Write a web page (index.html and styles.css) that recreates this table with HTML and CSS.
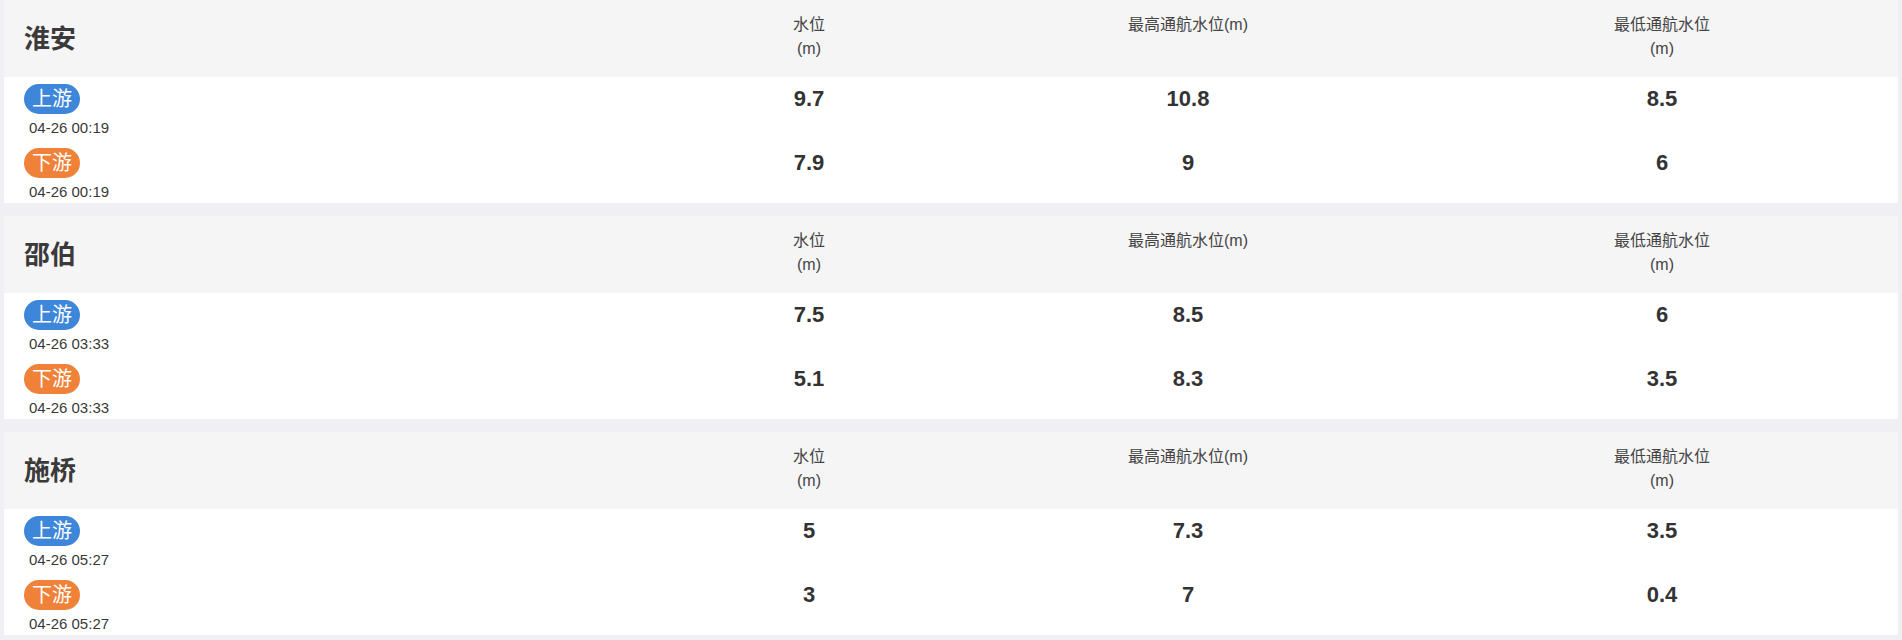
FILE: index.html
```html
<!DOCTYPE html>
<html lang="zh-CN">
<head>
<meta charset="utf-8">
<title>水位</title>
<link rel="stylesheet" href="styles.css">
</head>
<body>
<div class="list">
  <section class="card">
    <div class="grid head">
      <div class="title">淮安</div>
      <div class="th">水位<br>(m)</div>
      <div class="th">最高通航水位(m)</div>
      <div class="th">最低通航水位<br>(m)</div>
    </div>
    <div class="body">
      <div class="grid row">
        <div class="loc"><span class="badge up">上游</span><div class="date">04-26 00:19</div></div>
        <div class="val">9.7</div><div class="val">10.8</div><div class="val">8.5</div>
      </div>
      <div class="grid row">
        <div class="loc"><span class="badge down">下游</span><div class="date">04-26 00:19</div></div>
        <div class="val">7.9</div><div class="val">9</div><div class="val">6</div>
      </div>
    </div>
  </section>
  <section class="card">
    <div class="grid head">
      <div class="title">邵伯</div>
      <div class="th">水位<br>(m)</div>
      <div class="th">最高通航水位(m)</div>
      <div class="th">最低通航水位<br>(m)</div>
    </div>
    <div class="body">
      <div class="grid row">
        <div class="loc"><span class="badge up">上游</span><div class="date">04-26 03:33</div></div>
        <div class="val">7.5</div><div class="val">8.5</div><div class="val">6</div>
      </div>
      <div class="grid row">
        <div class="loc"><span class="badge down">下游</span><div class="date">04-26 03:33</div></div>
        <div class="val">5.1</div><div class="val">8.3</div><div class="val">3.5</div>
      </div>
    </div>
  </section>
  <section class="card">
    <div class="grid head">
      <div class="title">施桥</div>
      <div class="th">水位<br>(m)</div>
      <div class="th">最高通航水位(m)</div>
      <div class="th">最低通航水位<br>(m)</div>
    </div>
    <div class="body">
      <div class="grid row">
        <div class="loc"><span class="badge up">上游</span><div class="date">04-26 05:27</div></div>
        <div class="val">5</div><div class="val">7.3</div><div class="val">3.5</div>
      </div>
      <div class="grid row">
        <div class="loc"><span class="badge down">下游</span><div class="date">04-26 05:27</div></div>
        <div class="val">3</div><div class="val">7</div><div class="val">0.4</div>
      </div>
    </div>
  </section>
</div>
</body>
</html>
```
FILE: styles.css
```css
html, body {
  margin: 0;
  padding: 0;
  background: #efeff4;
}
body {
  font-family: "Liberation Sans", "Noto Sans CJK SC", sans-serif;
  color: #333;
}
.list {
  display: flex;
  flex-direction: column;
  gap: 13px;
  padding: 0 4px;
}
.card {
  background: #fff;
  height: 203px;
}
.grid {
  display: grid;
  grid-template-columns: 664px 282px 476px 472px;
}
.head {
  background: #f5f5f6;
  height: 77px;
}
.title {
  align-self: center;
  padding-left: 20px;
  font-size: 26px;
  font-weight: bold;
  color: #3a3a3a;
  line-height: 30px;
}
.th {
  padding-top: 13px;
  text-align: center;
  font-size: 16px;
  line-height: 24px;
  color: #444;
}
.body {
  display: flex;
  flex-direction: column;
  gap: 9px;
  padding-top: 7px;
}
.loc {
  padding-left: 20px;
}
.badge {
  display: inline-block;
  height: 30px;
  line-height: 30px;
  padding: 0 8px;
  border-radius: 15px;
  color: #fff;
  font-size: 20px;
}
.badge.up { background: #3d86d9; }
.badge.down { background: #ef8139; }
.date {
  margin-top: 3px;
  padding-left: 5px;
  font-size: 15px;
  line-height: 22px;
  color: #3a3a3a;
}
.val {
  text-align: center;
  font-size: 22px;
  font-weight: bold;
  line-height: 30px;
  color: #333;
}
```
